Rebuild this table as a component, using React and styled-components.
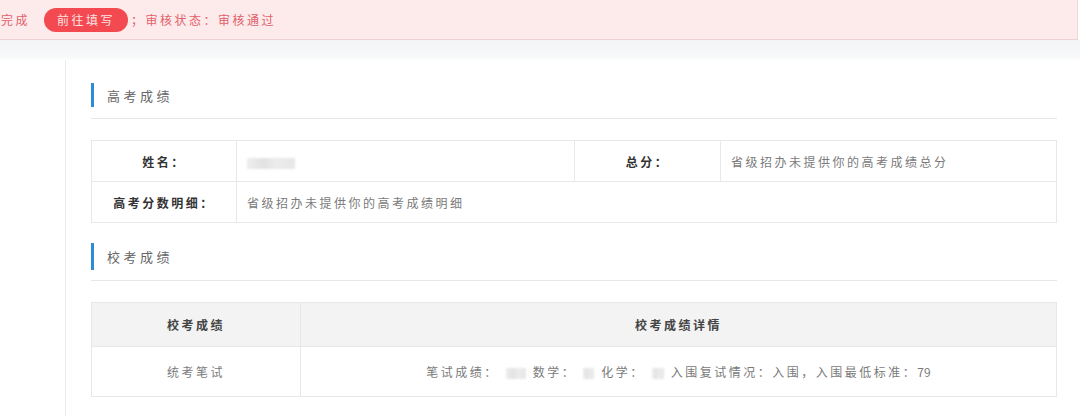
import React from "react";
import styled, { createGlobalStyle } from "styled-components";

const GlobalStyle = createGlobalStyle`
  body {
    margin: 0;
    background: #fff;
    font-family: "Noto Sans CJK SC", "Noto Sans", sans-serif;
  }
`;

const Notice = styled.div`
  height: 39px;
  margin-right: 2px;
  display: flex;
  align-items: center;
  background: #fdeaea;
  border-bottom: 1px solid #f0d2d3;
  border-right: 1px solid #efd8d8;
  color: #e2606c;
  font-size: 12px;
  letter-spacing: 2.5px;
  white-space: nowrap;
  overflow: hidden;
`;

const NoticeText = styled.span`
  margin-left: ${(p) => p.$offset || 0}px;
`;

const PillButton = styled.button`
  height: 24px;
  width: 84px;
  margin: 0 3px 0 14px;
  border: none;
  border-radius: 12px;
  background: #f34a51;
  color: #fde3e3;
  font-family: inherit;
  font-size: 12px;
  letter-spacing: 2.5px;
  cursor: pointer;
`;

const Strip = styled.div`
  height: 20px;
  background: linear-gradient(#f2f4f5, #f5f7f8 70%, #fbfcfc);
`;

const Body = styled.div`
  display: flex;
`;

const Gutter = styled.div`
  width: 65px;
  flex-shrink: 0;
`;

const Panel = styled.div`
  flex: 1;
  border-left: 1px solid #ececec;
  padding: 0 24px 20px 25px;
`;

const Heading = styled.div`
  margin-top: ${(p) => p.$top}px;
  height: ${(p) => p.$h || 24}px;
  display: flex;
  align-items: center;
  border-left: 3px solid #2f8bd2;
  padding-left: 13px;
  color: #666;
  font-size: 13px;
  letter-spacing: 3.5px;
`;

const Rule = styled.div`
  margin-top: ${(p) => p.$gap}px;
  border-bottom: 1px solid #e6e6e6;
`;

const Table = styled.table`
  width: 100%;
  margin-top: 21px;
  border-collapse: collapse;
  table-layout: fixed;
  font-size: 12px;
  letter-spacing: 2.5px;

  td,
  th {
    border: 1px solid #e8e8e8;
    padding: 0 10px;
  }
`;

const Label = styled.td`
  height: 40px;
  text-align: center;
  font-weight: 700;
  color: #333;
`;

const Value = styled.td`
  color: #7a7a7a;
`;

const HeadCell = styled.th`
  height: 43px;
  background: #f3f3f3;
  font-weight: 700;
  color: #444;
`;

const Cell = styled.td`
  height: 49px;
  text-align: center;
  color: #7a7a7a;
`;

const Masked = styled.span`
  display: inline-block;
  vertical-align: middle;
  width: ${(p) => p.$w}px;
  height: 11px;
  margin: 0 ${(p) => p.$gap || 0}px;
  background: linear-gradient(90deg, #eeeeee, #e2e2e2 35%, #ececec 60%, #e6e6e6);
  filter: blur(1px);
`;

const Num = styled.span`
  letter-spacing: 0;
`;

export default function App() {
  return (
    <>
      <GlobalStyle />
      <Notice>
        <NoticeText $offset={1}>完成</NoticeText>
        <PillButton>前往填写</PillButton>
        <NoticeText>；审核状态：审核通过</NoticeText>
      </Notice>
      <Strip />
      <Body>
        <Gutter />
        <Panel>
          <Heading $top={23}>高考成绩</Heading>
          <Rule $gap={11} />
          <Table>
            <colgroup>
              <col style={{ width: 145 }} />
              <col style={{ width: 338 }} />
              <col style={{ width: 146 }} />
              <col style={{ width: 336 }} />
            </colgroup>
            <tbody>
              <tr>
                <Label>姓名：</Label>
                <Value>
                  <Masked $w={48} />
                </Value>
                <Label>总分：</Label>
                <Value>省级招办未提供你的高考成绩总分</Value>
              </tr>
              <tr>
                <Label>高考分数明细：</Label>
                <Value colSpan={3}>省级招办未提供你的高考成绩明细</Value>
              </tr>
            </tbody>
          </Table>
          <Heading $top={20} $h={27}>校考成绩</Heading>
          <Rule $gap={10} />
          <Table>
            <colgroup>
              <col style={{ width: 209 }} />
              <col />
            </colgroup>
            <thead>
              <tr>
                <HeadCell>校考成绩</HeadCell>
                <HeadCell>校考成绩详情</HeadCell>
              </tr>
            </thead>
            <tbody>
              <tr>
                <Cell>统考笔试</Cell>
                <Cell>
                  笔试成绩：<Masked $w={20} $gap={7} />数学：
                  <Masked $w={11} $gap={7} />化学：
                  <Masked $w={12} $gap={7} />入围复试情况：入围，入围最低标准：
                  <Num>79</Num>
                </Cell>
              </tr>
            </tbody>
          </Table>
        </Panel>
      </Body>
    </>
  );
}
